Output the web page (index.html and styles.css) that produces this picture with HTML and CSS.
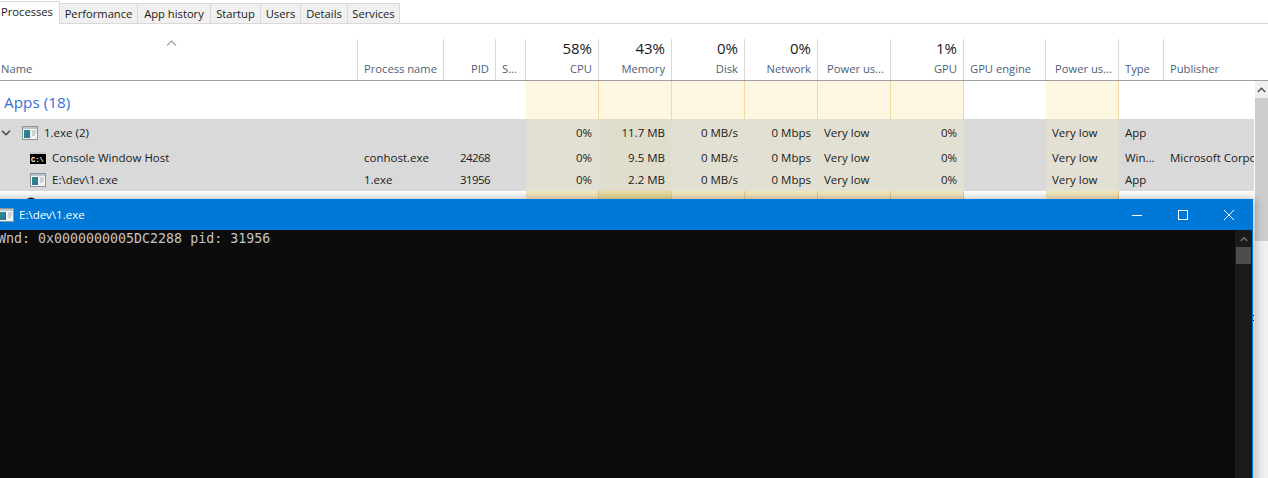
FILE: index.html
```html
<!DOCTYPE html>
<html lang="en">
<head>
<meta charset="utf-8">
<title>Task Manager</title>
<link rel="stylesheet" href="styles.css">
</head>
<body>
<div class="app">
  <nav class="tabs">
    <span class="tab active">Processes</span>
    <span class="tab">Performance</span>
    <span class="tab">App history</span>
    <span class="tab">Startup</span>
    <span class="tab">Users</span>
    <span class="tab">Details</span>
    <span class="tab">Services</span>
    <span class="tab-rest"></span>
  </nav>
  <div class="head cols">
    <div class="hc sep name"><svg class="sort" width="11" height="6" viewBox="0 0 11 6"><path d="M1 5.5 5.5 1 10 5.5" fill="none" stroke="#a0a8b0" stroke-width="1.3"/></svg><span class="lbl">Name</span></div>
    <div class="hc sep"><span class="lbl">Process name</span></div>
    <div class="hc sep right"><span class="lbl">PID</span></div>
    <div class="hc sep"><span class="lbl">S...</span></div>
    <div class="hc sep right"><span class="pct">58%</span><span class="lbl">CPU</span></div>
    <div class="hc sep right"><span class="pct">43%</span><span class="lbl">Memory</span></div>
    <div class="hc sep right"><span class="pct">0%</span><span class="lbl">Disk</span></div>
    <div class="hc sep right"><span class="pct">0%</span><span class="lbl">Network</span></div>
    <div class="hc sep power"><span class="lbl">Power us...</span></div>
    <div class="hc sep right"><span class="pct">1%</span><span class="lbl">GPU</span></div>
    <div class="hc sep"><span class="lbl">GPU engine</span></div>
    <div class="hc sep power"><span class="lbl">Power us...</span></div>
    <div class="hc sep"><span class="lbl">Type</span></div>
    <div class="hc"><span class="lbl">Publisher</span></div>
  </div>
  <div class="body">
    <div class="rows">
      <div class="row cols group">
        <div class="c title">Apps (18)</div><div class="c"></div><div class="c"></div><div class="c"></div>
        <div class="c h"></div><div class="c h"></div><div class="c h"></div><div class="c h"></div><div class="c h"></div><div class="c h"></div>
        <div class="c"></div><div class="c h"></div><div class="c"></div><div class="c"></div>
      </div>
      <div class="row cols sel tall">
        <div class="c nm"><svg class="chev" width="10" height="6" viewBox="0 0 10 6"><path d="M1 .8 5 4.8 9 .8" fill="none" stroke="#444" stroke-width="1.5"/></svg><svg class="ico" width="16" height="14" viewBox="0 0 16 14"><use href="#win"/></svg><span>1.exe (2)</span></div>
        <div class="c"></div><div class="c"></div><div class="c"></div>
        <div class="c h r">0%</div><div class="c m r">11.7 MB</div><div class="c h r">0 MB/s</div><div class="c h r">0 Mbps</div><div class="c h">Very low</div><div class="c h r">0%</div>
        <div class="c"></div><div class="c h">Very low</div><div class="c">App</div><div class="c"></div>
      </div>
      <div class="row cols sel">
        <div class="c nm child"><svg class="ico" width="16" height="12" viewBox="0 0 16 12"><rect width="16" height="12" fill="#000"/><rect width="16" height="2" fill="#c8c8c8"/><text x="1" y="9.5" font-family="Liberation Mono" font-size="7" font-weight="700" fill="#fff">C:\</text></svg><span>Console Window Host</span></div>
        <div class="c">conhost.exe</div><div class="c r pid">24268</div><div class="c"></div>
        <div class="c h r">0%</div><div class="c m r">9.5 MB</div><div class="c h r">0 MB/s</div><div class="c h r">0 Mbps</div><div class="c h">Very low</div><div class="c h r">0%</div>
        <div class="c"></div><div class="c h">Very low</div><div class="c">Win...</div><div class="c clip">Microsoft Corporation</div>
      </div>
      <div class="row cols sel">
        <div class="c nm child"><svg class="ico" width="16" height="14" viewBox="0 0 16 14"><use href="#win"/></svg><span>E:\dev\1.exe</span></div>
        <div class="c">1.exe</div><div class="c r pid">31956</div><div class="c"></div>
        <div class="c h r">0%</div><div class="c m r">2.2 MB</div><div class="c h r">0 MB/s</div><div class="c h r">0 Mbps</div><div class="c h">Very low</div><div class="c h r">0%</div>
        <div class="c"></div><div class="c h">Very low</div><div class="c">App</div><div class="c"></div>
      </div>
      <div class="row cols peek">
        <div class="c peek-name"><svg width="14" height="14" viewBox="0 0 14 14"><circle cx="7" cy="7" r="6.5" fill="#2a1a1c"/><circle cx="7" cy="7" r="3.5" fill="#b02030"/></svg></div><div class="c"></div><div class="c"></div><div class="c"></div>
        <div class="c h"></div><div class="c m"></div><div class="c h"></div><div class="c h"></div><div class="c h"></div><div class="c h"></div>
        <div class="c"></div><div class="c h"></div><div class="c"></div><div class="c"></div>
      </div>
    </div>
    <div class="vscroll">
      <div class="vbtn"><svg width="9" height="6" viewBox="0 0 9 6"><path d="M.8 5 4.5 1.3 8.2 5" fill="none" stroke="#555" stroke-width="1.6"/></svg></div>
      <div class="vthumb"></div>
    </div>
  </div>
</div>

<section class="console">
  <header class="con-title">
    <svg class="con-ico" width="16" height="14" viewBox="0 0 16 14"><use href="#win"/></svg>
    <span class="con-name">E:\dev\1.exe</span>
    <span class="con-btns">
      <svg class="wb" width="46" height="30" viewBox="0 0 46 30"><path d="M18 15.5H28" stroke="#fff"/></svg>
      <svg class="wb" width="46" height="30" viewBox="0 0 46 30"><rect x="18.5" y="10.5" width="9" height="9" fill="none" stroke="#fff"/></svg>
      <svg class="wb" width="46" height="30" viewBox="0 0 46 30"><path d="M18 10 28 20M28 10 18 20" stroke="#fff" fill="none"/></svg>
    </span>
  </header>
  <div class="con-body">
    <pre class="con-text">Wnd: 0x0000000005DC2288 pid: 31956</pre>
    <div class="con-scroll">
      <div class="con-up"><svg width="8" height="6" viewBox="0 0 8 6"><path d="M.7 5 4 1.7 7.3 5" fill="none" stroke="#6a6a6a" stroke-width="1.6"/></svg></div>
      <div class="con-thumb"></div>
    </div>
  </div>
</section>
<span class="grip"></span>

<svg class="defs" width="0" height="0">
  <defs>
    <linearGradient id="winfill" x1="0" y1="0" x2="1" y2="1">
      <stop offset="0" stop-color="#2f8f7a"/>
      <stop offset="1" stop-color="#2b6ea8"/>
    </linearGradient>
  </defs>
  <symbol id="win" viewBox="0 0 16 14">
    <rect x=".5" y=".5" width="15" height="13" fill="#f2f4f4" stroke="#8c9698"/>
    <rect x="1" y="1" width="14" height="2" fill="#b9c6cc"/>
    <rect x="2" y="4" width="6" height="8" fill="url(#winfill)"/>
    <path d="M10 5h4M10 7h4M10 9h3" stroke="#a8b0b2"/>
  </symbol>
</svg>
</body>
</html>
```
FILE: styles.css
```css
* { box-sizing: border-box; }
html, body { margin: 0; height: 100%; overflow: hidden; background: #fff; }
body { font-family: "Open Sans", "Liberation Sans", sans-serif; font-size: 11.5px; color: #1a1a1a; position: relative; }
.tabs { display: flex; height: 24px; padding-top: 3px; font-size: 11.2px; }
.tab { height: 21px; line-height: 20px; text-align: center; background: #f0f0f0; border: 1px solid #d9d9d9; border-left: 0; white-space: nowrap; }
.tab:nth-child(2) { width: 78px; }
.tab:nth-child(3) { width: 73px; }
.tab:nth-child(4) { width: 50px; }
.tab:nth-child(5) { width: 40px; }
.tab:nth-child(6) { width: 47px; }
.tab:nth-child(7) { width: 52px; }
.tab.active { width: 60px; margin-top: -2px; height: 23px; text-align: left; padding-left: 1px; line-height: 19px; background: #fff; border-bottom: 0; }
.tab-rest { flex: 1; border-bottom: 1px solid #d9d9d9; }
.cols { display: grid; grid-template-columns: 358px 86px 52px 30px 73px 73px 73px 73px 73px 73px 82px 73px 45px 90px; }
.head { height: 57px; padding-top: 15px; border-bottom: 1px solid #a0a0a0; font-size: 11.2px; }
.hc { position: relative; display: flex; flex-direction: column; justify-content: flex-end; padding: 0 6px 3px 6px; color: #4c607a; white-space: nowrap; }
.hc.sep { border-right: 1px solid #d9d9d9; }
.hc.right { text-align: right; }
.hc.name { padding-left: 1px; }
.hc.power { padding-left: 9px; }
.sort { position: absolute; left: 166px; top: 1px; }
.pct { font-size: 15px; line-height: 20px; color: #1a1a1a; margin: -1px 0 3px; }
.lbl { line-height: 16px; }
.body { display: flex; }
.rows { width: 1254px; margin-right: 1px; }
.row { height: 22px; }
.row.group { height: 38px; }
.row.tall { height: 28px; }
.row.peek { height: 8px; }
.c { padding: 0 6px; line-height: 22px; white-space: nowrap; overflow: hidden; }
.r { text-align: right; }
.pid { letter-spacing: -.6px; }
.title { font-size: 15.3px; line-height: 42px; color: #3a6fd8; padding-left: 4px; overflow: visible; }
.h { background: #fdf6e0; border-right: 1px solid #f1d9a0; }
.m { background: #fdf6e0; border-right: 1px solid #f1d9a0; }
.sel { background: #d9d9d9; }
.sel .h { background: #e2e0d3; border-right: 1px solid #dfe2da; }
.sel .m { background: #e0ddcc; border-right: 1px solid #dfe2da; }
.peek .h { background: #f3e8be; border-right: 1px solid #e4c98e; }
.peek .m { background: #e9dc9f; border-right: 1px solid #e4c98e; }
.peek-name { padding: 6px 0 0 24px; line-height: 0; }
.tall .c { line-height: 28px; }
.nm { display: flex; align-items: center; padding: 0; overflow: visible; }
.chev { margin-left: 1px; margin-right: 11px; }
.ico { flex: none; margin-right: 6px; }
.child { padding-left: 30px; }
.vscroll { width: 13px; background: #f0f0f0; height: 400px; }
.vbtn { height: 17px; display: flex; align-items: center; justify-content: center; background: #f0f0f0; }
.vthumb { height: 143px; background: #cdcdcd; }
.console { position: absolute; left: -8px; top: 199px; width: 1261px; height: 290px; background: #0c0c0c; border: 1px solid #0078d7; border-top: 0; box-shadow: 4px 0 8px rgba(0,0,0,.18), 0 -3px 6px rgba(0,0,0,.1); }
.con-title { display: flex; align-items: center; height: 31px; background: #0078d7; color: #fff; padding-left: 5px; }
.con-ico { margin-right: 5px; }
.con-btns { margin-left: auto; display: flex; }
.wb { display: block; }
.con-body { display: flex; height: 250px; }
.con-text { flex: 1; margin: 0; padding: 1px 0 0 5px; font-family: "DejaVu Sans Mono", "Liberation Mono", monospace; font-size: 13.3px; line-height: 16px; color: #c4c4c4; }
.con-scroll { width: 17px; background: #1a1a1a; }
.con-up { height: 17px; display: flex; align-items: center; justify-content: center; }
.con-thumb { height: 17px; background: #4d4d4d; width: 15px; margin-left: 1px; }
.grip { position: absolute; left: 1253px; top: 315px; width: 1px; height: 1px; background: #111; box-shadow: 0 5px 0 #111; }
.defs { position: absolute; }
```
